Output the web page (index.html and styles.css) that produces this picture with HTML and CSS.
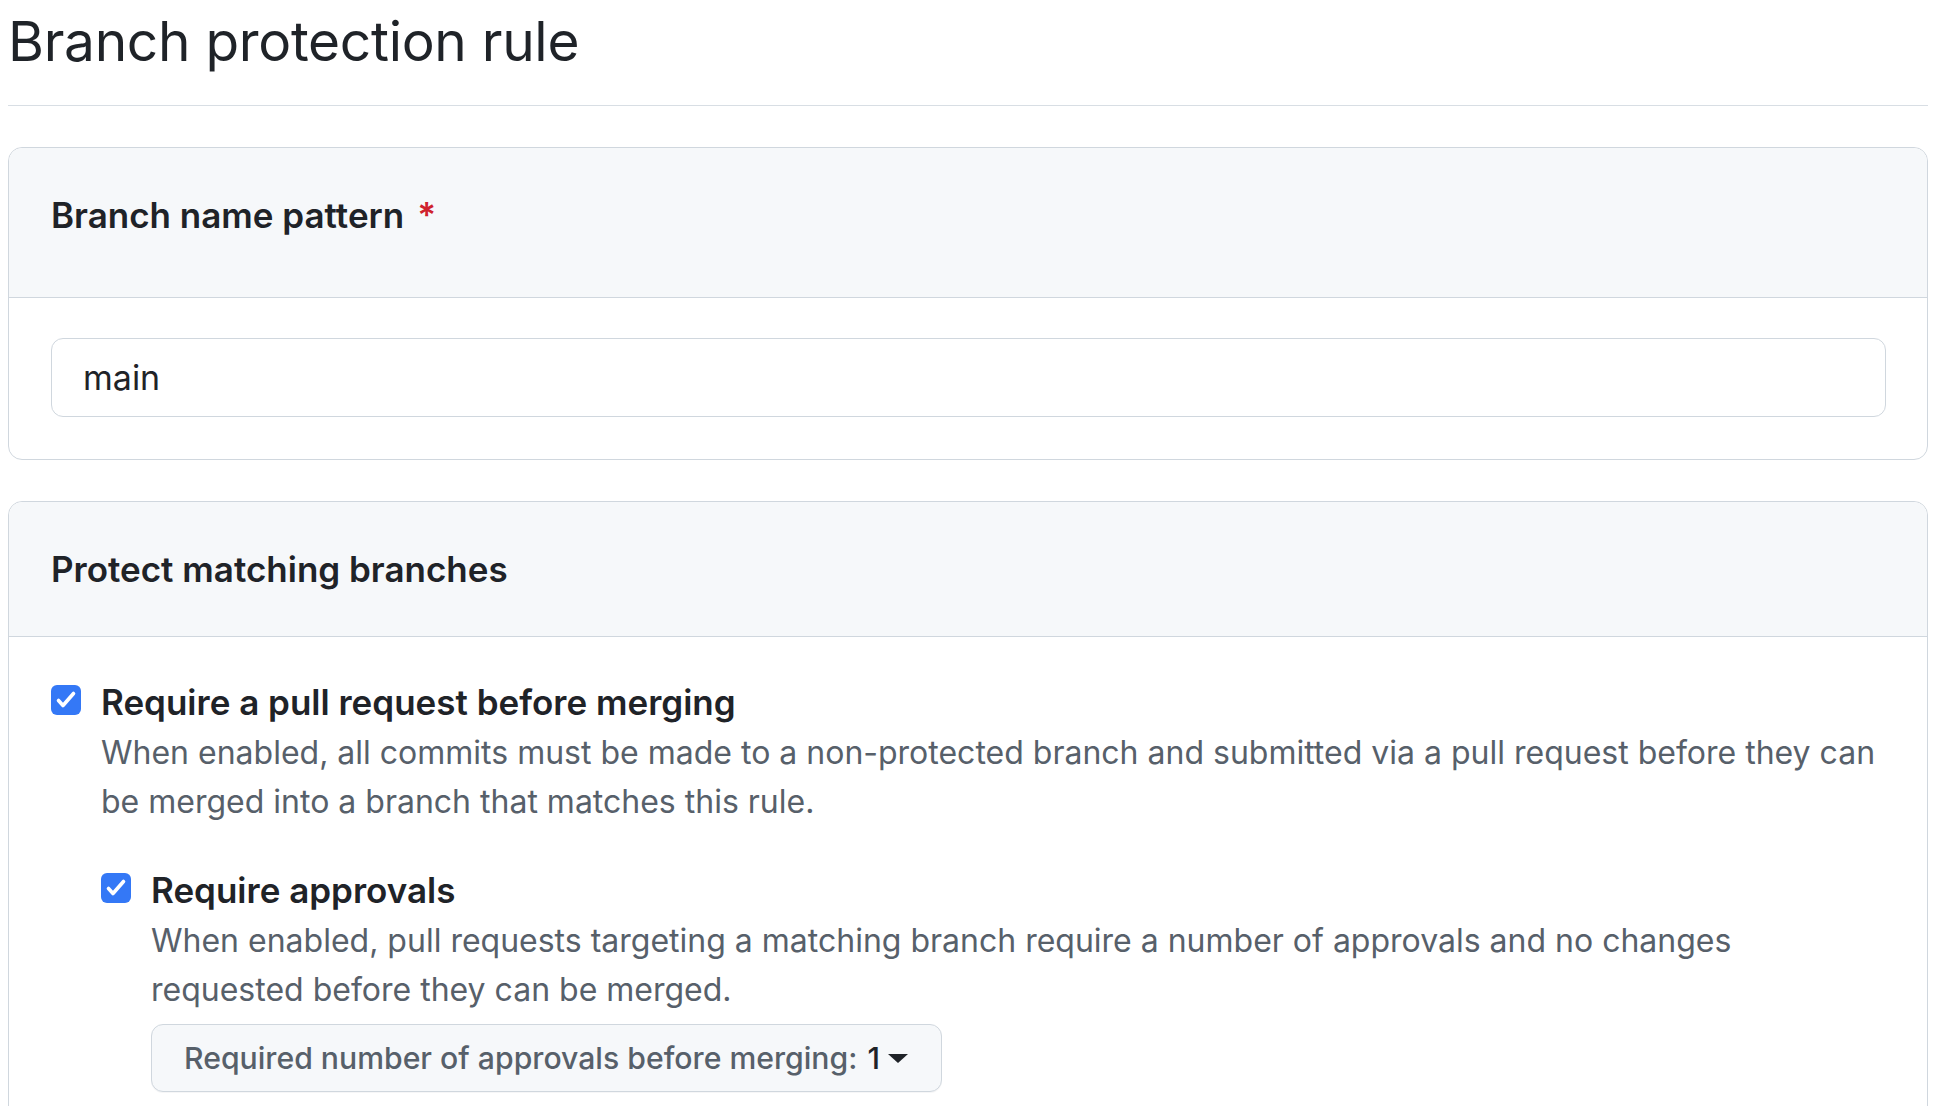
FILE: index.html
```html
<!DOCTYPE html>
<html lang="en">
<head>
<meta charset="utf-8">
<title>Branch protection rule</title>
<link rel="stylesheet" href="styles.css">
</head>
<body>
<main class="page">
  <div class="subhead">
    <h1 class="subhead-heading">Branch protection rule</h1>
  </div>

  <section class="box">
    <div class="box-header box-header--tall">
      <label class="box-title" for="rule-pattern">Branch name pattern<span class="required">*</span></label>
    </div>
    <div class="box-body">
      <input class="form-control" id="rule-pattern" type="text" value="main">
    </div>
  </section>

  <section class="box box--open">
    <div class="box-header">
      <h2 class="box-title">Protect matching branches</h2>
    </div>
    <div class="box-body box-body--rules">
      <div class="rule">
        <span class="check" aria-hidden="true">
          <svg viewBox="0 0 30 30" width="30" height="30"><path d="M7.5 15.5 L12 20.5 L22.5 8.5" fill="none" stroke="#fff" stroke-width="3.6" stroke-linecap="round" stroke-linejoin="round"/></svg>
        </span>
        <div class="rule-content">
          <div class="rule-title">Require a pull request before merging</div>
          <p class="rule-note">When enabled, all commits must be made to a non-protected branch and submitted via a pull request before they can be merged into a branch that matches this rule.</p>

          <div class="rule rule--nested">
            <span class="check" aria-hidden="true">
              <svg viewBox="0 0 30 30" width="30" height="30"><path d="M7.5 15.5 L12 20.5 L22.5 8.5" fill="none" stroke="#fff" stroke-width="3.6" stroke-linecap="round" stroke-linejoin="round"/></svg>
            </span>
            <div class="rule-content">
              <div class="rule-title">Require approvals</div>
              <p class="rule-note">When enabled, pull requests targeting a matching branch require a number of approvals and no changes requested before they can be merged.</p>
              <button class="select-button" type="button">
                <span class="select-label">Required number of approvals before merging:</span>
                <span class="select-value">1</span>
                <svg class="select-caret" viewBox="0 0 20 9" width="20" height="9"><path d="M0 0 H20 L10 9 Z" fill="#1f2328"/></svg>
              </button>
            </div>
          </div>
        </div>
      </div>
    </div>
  </section>
</main>
</body>
</html>
```

FILE: styles.css
```css
html {
  overflow: hidden;
}

body {
  margin: 8px;
  background: #ffffff;
  color: #1f2328;
  font-family: Inter, "Noto Sans", "Liberation Sans", sans-serif;
}

.subhead {
  padding-bottom: 30px;
  border-bottom: 1px solid #d8dee4;
}

.subhead-heading {
  margin: 0;
  font-size: 55px;
  font-weight: 400;
  line-height: 67px;
  letter-spacing: -0.3px;
}

.box {
  margin-top: 41px;
  border: 1px solid #d0d7de;
  border-radius: 14px;
}

.box-header {
  padding: 47px 41px 47px 42px;
  background: #f6f8fa;
  border-bottom: 1px solid #d0d7de;
  border-radius: 14px 14px 0 0;
}

.box-header--tall {
  padding-bottom: 62px;
}

.box-title {
  display: block;
  margin: 0;
  font-size: 35px;
  font-weight: 600;
  line-height: 40px;
}

.required {
  margin-left: 13px;
  color: #cf222e;
  font-weight: 600;
}

.box-body {
  padding: 40px 41px 42px 42px;
}

.box-body--rules {
  padding-top: 41px;
  padding-bottom: 80px;
}

.form-control {
  display: block;
  box-sizing: border-box;
  width: 100%;
  height: 79px;
  margin: 0;
  padding: 0 31px;
  border: 1px solid #d0d7de;
  border-radius: 12px;
  background: #ffffff;
  color: #1f2328;
  font-family: inherit;
  font-size: 34px;
  outline: none;
}

.rule {
  display: flex;
  gap: 20px;
}

.rule--nested {
  margin-top: 40px;
}

.check {
  flex: 0 0 30px;
  display: flex;
  width: 30px;
  height: 30px;
  margin-top: 7px;
  border-radius: 6px;
  background: #3478f6;
}

.rule-content {
  flex: 1;
  min-width: 0;
}

.rule-title {
  font-size: 35px;
  font-weight: 600;
  line-height: 48px;
}

.rule-note {
  margin: 0;
  padding-top: 2px;
  color: #57606a;
  font-size: 32px;
  line-height: 49px;
}

.select-button {
  display: inline-flex;
  align-items: center;
  box-sizing: border-box;
  height: 68px;
  margin-top: 10px;
  padding: 0 33px 0 32px;
  border: 1px solid #d0d7de;
  border-radius: 12px;
  background: #f6f8fa;
  box-shadow: 0 1px 0 rgba(31, 35, 40, 0.04);
  font-family: inherit;
  font-size: 30.2px;
  font-weight: 500;
  cursor: pointer;
}

.select-label {
  color: #57606a;
}

.select-value {
  margin-left: 10px;
  color: #1f2328;
}

.select-caret {
  margin-left: 8px;
}
```
